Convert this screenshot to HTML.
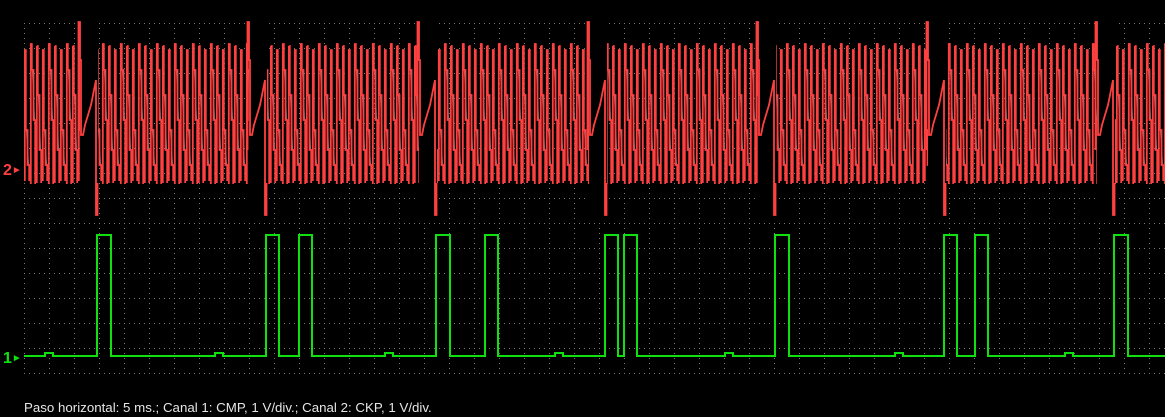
<!DOCTYPE html>
<html><head><meta charset="utf-8"><style>
html,body{margin:0;padding:0;background:#000;width:1165px;height:417px;overflow:hidden}
svg{position:absolute;left:0;top:0}
.t{position:absolute;left:24px;top:400px;font:13.3px "Liberation Sans",sans-serif;color:#e6e6e6;white-space:nowrap}
.l{position:absolute;font:bold 16px "Liberation Sans",sans-serif}
</style></head><body>
<svg width="1165" height="417" xmlns="http://www.w3.org/2000/svg">
<defs>
<pattern id="grid" x="24" y="23" width="25" height="25" patternUnits="userSpaceOnUse">
<path d="M0 0h1v1h-1zM5 0h1v1h-1zM10 0h1v1h-1zM15 0h1v1h-1zM20 0h1v1h-1zM0 5h1v1h-1zM0 10h1v1h-1zM0 15h1v1h-1zM0 20h1v1h-1z" fill="#7a7a7a"/>
</pattern>
<pattern id="teeth" x="0" y="0" width="18" height="417" patternUnits="userSpaceOnUse">
<path d="M2.5 95L4.5 150M8.5 130L10.5 165M14.5 70L16.5 120" stroke="#8a8a8a" stroke-width="1"/>
<path d="M0.8 183V46M0.8 46H1.8V95H3.5V150H5.2V183M6.8 181V50H7.8V130H9.5V165H11.2V181M12.8 184V44H13.8V70H15.5V120H17.2V184" fill="none" stroke="#ff4040" stroke-width="1.8"/>
</pattern>
<g id="gap">
<rect x="1" y="15" width="18" height="205" fill="#000"/>
<path d="M-0.5 150V22H1V60H2V135H4L6 125L9 115L12 105L14 95L16 85L17 80V215H18.5V183" fill="none" stroke="#ff4040" stroke-width="1.8"/>
</g>
</defs>
<rect x="24" y="23" width="1141" height="353" fill="url(#grid)"/>
<rect x="24" y="40" width="1141" height="150" fill="url(#teeth)"/>
<use href="#gap" x="79"/>
<use href="#gap" x="248"/>
<use href="#gap" x="418"/>
<use href="#gap" x="588"/>
<use href="#gap" x="757"/>
<use href="#gap" x="927"/>
<use href="#gap" x="1096"/>
<polyline fill="none" stroke="#10e010" stroke-width="2" points="24,356 45,356 45,353 53,353 53,356 97,356 97,235 111,235 111,356 215,356 215,353 223,353 223,356 266,356 266,235 279,235 279,356 299,356 299,235 312,235 312,356 385,356 385,353 393,353 393,356 436,356 436,235 450,235 450,356 485,356 485,235 498,235 498,356 555,356 555,353 563,353 563,356 605,356 605,235 618,235 618,356 624,356 624,235 637,235 637,356 725,356 725,353 733,353 733,356 775,356 775,235 789,235 789,356 895,356 895,353 903,353 903,356 944,356 944,235 957,235 957,356 975,356 975,235 988,235 988,356 1065,356 1065,353 1073,353 1073,356 1114,356 1114,235 1128,235 1128,356 1165,356"/>
</svg>
<div class="l" style="left:3px;top:162px;color:#ff4040">2<span style="font-size:10px;position:relative;top:-2px">&#9658;</span></div>
<div class="l" style="left:3px;top:350px;color:#10e010">1<span style="font-size:10px;position:relative;top:-2px">&#9658;</span></div>
<div class="t">Paso horizontal: 5 ms.; Canal 1: CMP, 1 V/div.; Canal 2: CKP, 1 V/div.</div>
</body></html>
